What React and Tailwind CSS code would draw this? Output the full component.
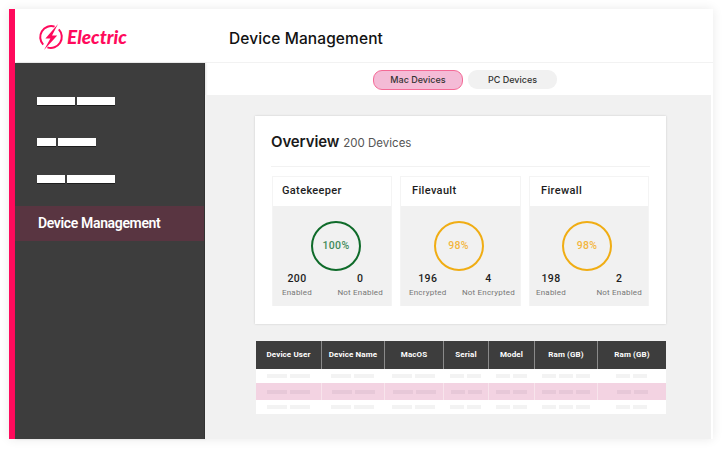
const navBars = [
  { bars: ['w-[38px]', 'w-[38px]'], className: 'mt-[34px]' },
  { bars: ['w-[19px]', 'w-[38px]'], className: 'mt-[33px]' },
  { bars: ['w-[28px]', 'w-[48px]'], className: 'mt-[29px]' },
]

const stats = [
  {
    title: 'Gatekeeper',
    percent: '100%',
    ring: 'border-[#0f6b2a] ml-[8px]',
    percentText: 'text-[#3f8a5a]',
    left: ['200', 'Enabled'],
    right: ['0', 'Not Enabled'],
    width: 'w-[120px]',
    titlePad: 'pl-[9px]',
    rowPad: 'pl-[9px] pr-[8px]',
  },
  {
    title: 'Filevault',
    percent: '98%',
    ring: 'border-[#f0ad14] mr-[4px]',
    percentText: 'text-[#f3b63f]',
    left: ['196', 'Encrypted'],
    right: ['4', 'Not Encrypted'],
    width: 'w-[121px]',
    titlePad: 'pl-[11px]',
    rowPad: 'pl-[8px] pr-[5px]',
  },
  {
    title: 'Firewall',
    percent: '98%',
    ring: 'border-[#f0ad14] mr-[4px]',
    percentText: 'text-[#f3b63f]',
    left: ['198', 'Enabled'],
    right: ['2', 'Not Enabled'],
    width: 'w-[120px]',
    titlePad: 'pl-[11px]',
    rowPad: 'pl-[6px] pr-[6px]',
  },
]

const columns = [
  { label: 'Device User', width: 'w-[65px]', bars: ['w-[20px]', 'w-[20px]'] },
  { label: 'Device Name', width: 'w-[63px]', bars: ['w-[20px]', 'w-[20px]'] },
  { label: 'MacOS', width: 'w-[59px]', bars: ['w-[20px]', 'w-[20px]'] },
  { label: 'Serial', width: 'w-[45px]', bars: ['w-[14px]', 'w-[14px]'] },
  { label: 'Model', width: 'w-[46px]', bars: ['w-[14px]', 'w-[14px]'] },
  { label: 'Ram (GB)', width: 'w-[63px]', bars: ['w-[14px]', 'w-[14px]', 'w-[14px]'] },
  { label: 'Ram (GB)', width: 'w-[69px]', bars: ['w-[14px]', 'w-[14px]'] },
]

function BoltLogo() {
  return (
    <svg width="26" height="28" viewBox="0 0 26 28" fill="none">
      <path d="M16.6 3.6A11 11 0 0 0 5.2 21.6" stroke="#ff0a5c" strokeWidth="2" />
      <path d="M9.4 24.4A11 11 0 0 0 20.8 6.4" stroke="#ff0a5c" strokeWidth="2" />
      <path d="M20 1 7.4 15.4h5L6 27 19.2 12.6h-5.2L20 1Z" fill="#ff0a5c" />
    </svg>
  )
}

function StatCard({ stat }) {
  return (
    <div className={`${stat.width} shrink-0 border border-b-0 border-[#f4f4f4]`}>
      <div className={`flex h-[29px] items-center ${stat.titlePad} font-['Roboto',sans-serif] text-[11px] font-medium tracking-[0.35px] text-[#1d1d1d]`}>
        {stat.title}
      </div>
      <div className="flex h-[100px] flex-col items-center bg-[#f1f1f1] pt-[15px]">
        <div className={`flex h-[50px] w-[50px] items-center justify-center rounded-full border-2 ${stat.ring}`}>
          <span className={`font-['Roboto',sans-serif] text-[10.5px] font-medium tracking-[0.3px] ${stat.percentText}`}>
            {stat.percent}
          </span>
        </div>
        <div className={`flex w-full justify-between ${stat.rowPad}`}>
          {[stat.left, stat.right].map(([value, label]) => (
            <div key={label} className="flex flex-col items-center font-['Roboto',sans-serif]">
              <span className="text-[10.5px] leading-[15px] font-medium tracking-[0.4px] text-[#1d1d1d]">{value}</span>
              <span className="text-[8px] leading-[14px] tracking-[0.2px] text-[#777]">{label}</span>
            </div>
          ))}
        </div>
      </div>
    </div>
  )
}

function TableRow({ bg, barColor, divider, height }) {
  return (
    <div className={`flex ${height} ${bg}`}>
      {columns.map((col, i) => (
        <div
          key={i}
          className={`${col.width} flex items-center justify-center gap-[3px] ${divider && i > 0 ? 'border-l border-[#f8e4ec]' : ''}`}
        >
          {col.bars.map((w, j) => (
            <div key={j} className={`h-[4px] ${w} ${barColor}`} />
          ))}
        </div>
      ))}
    </div>
  )
}

export default function App() {
  return (
    <div className="h-[450px] w-[722px] overflow-hidden bg-white p-[9px] pb-[11px]">
      <div className="flex h-[430px] w-[704px] bg-white shadow-[0_0_10px_rgba(0,0,0,0.09)]">
        <div className="w-[6px] shrink-0 bg-[#ff0a5c]" />
        <div className="flex min-w-0 flex-1 flex-col">
          <header className="flex h-[54px] shrink-0 items-center border-b border-[#f2f2f2]">
            <div className="flex w-[190px] shrink-0 items-center pt-[3px] pl-[23px]">
              <BoltLogo />
              <span className="ml-[3px] font-['Lato',sans-serif] text-[19px] font-black italic text-[#ff0a5c]">
                Electric
              </span>
            </div>
            <h1 className="ml-[24px] pt-[6px] font-['Inter',sans-serif] text-[15.5px] font-medium tracking-[0.1px] text-[#111]">
              Device Management
            </h1>
          </header>
          <div className="flex min-h-0 flex-1">
            <aside className="w-[190px] shrink-0 border-r border-[#333] bg-[#3d3d3d] shadow-[1px_0_2px_rgba(0,0,0,0.12)]">
              {navBars.map((row, i) => (
                <div key={i} className={`flex gap-[2px] pl-[22px] ${row.className}`}>
                  {row.bars.map((w, j) => (
                    <div key={j} className={`h-[8px] ${w} bg-white shadow-[0_1px_0_rgba(0,0,0,0.5)]`} />
                  ))}
                </div>
              ))}
              <div className="mt-[23px] flex h-[35px] items-center bg-[#593541] pl-[23px] font-['Roboto',sans-serif] text-[14px] font-semibold tracking-[-0.35px] text-white">
                Device Management
              </div>
            </aside>
            <main className="flex min-w-0 flex-1 flex-col">
              <div className="flex h-[32px] shrink-0 items-center justify-center gap-[5px] pt-[1px] pl-[12px] font-['Inter',sans-serif] text-[9px] font-medium text-[#333]">
                <div className="flex h-[20px] w-[90px] items-center justify-center rounded-[9px] border border-[#f46a96] bg-[#f4bbd6]">
                  Mac Devices
                </div>
                <div className="flex h-[19px] w-[89px] items-center justify-center rounded-[9px] bg-[#f1f1f1]">
                  PC Devices
                </div>
              </div>
              <div className="mr-[2px] flex-1 bg-[#f1f1f1] pt-[21px] pl-[50px]">
                <section className="h-[208px] w-[411px] bg-white px-[16px] pt-[15px] shadow-[0_0_2px_rgba(0,0,0,0.16)]">
                  <div className="flex h-[36px] items-baseline gap-[4px] border-b border-[#f2f2f2] font-['Inter',sans-serif]">
                    <span className="text-[15px] font-semibold tracking-[-0.1px] text-[#1a1a1a]">Overview</span>
                    <span className="text-[11.5px] text-[#555]">200 Devices</span>
                  </div>
                  <div className="mt-[9px] ml-[1px] flex gap-[8px]">
                    {stats.map((stat) => (
                      <StatCard key={stat.title} stat={stat} />
                    ))}
                  </div>
                </section>
                <div className="mt-[17px] ml-[1px] w-[410px]">
                  <div className="flex h-[28px] bg-[#3d3d3d]">
                    {columns.map((col, i) => (
                      <div
                        key={i}
                        className={`${col.width} flex items-center justify-center font-['Roboto',sans-serif] text-[8px] font-bold tracking-[0.1px] text-white ${i > 0 ? 'border-l border-[#8a8a8a]' : ''}`}
                      >
                        {col.label}
                      </div>
                    ))}
                  </div>
                  <TableRow bg="bg-white" barColor="bg-[#f3f3f3]" height="h-[14px]" />
                  <TableRow bg="bg-[#f3d3e2]" barColor="bg-[#e7c8d8]" divider height="h-[17px]" />
                  <TableRow bg="bg-white" barColor="bg-[#f3f3f3]" height="h-[14px]" />
                </div>
              </div>
            </main>
          </div>
        </div>
      </div>
    </div>
  )
}
